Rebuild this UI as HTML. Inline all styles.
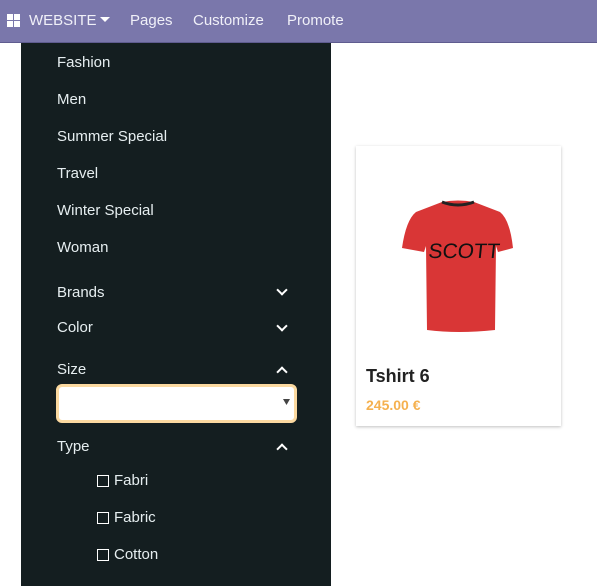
<!DOCTYPE html>
<html><head><meta charset="utf-8"><style>
body{margin:0;width:597px;height:586px;overflow:hidden;background:#fff;font-family:"Liberation Sans",sans-serif;position:relative}
.nav{position:absolute;left:0;top:0;width:597px;height:42px;background:#7a77ab;border-bottom:1px solid #5f5c8f;color:#f0f0f8;font-size:15px}
.nav span{position:absolute;top:12px}
.side{position:absolute;left:21px;top:43px;width:310px;height:543px;background:#141e20;color:#e6eef0;font-size:15px}
.t{position:absolute;left:36px;line-height:18px}
.chev{position:absolute;left:257px;width:6px;height:6px;border-right:2.5px solid #fff;border-bottom:2.5px solid #fff}
.cb{position:absolute;left:76px;width:10px;height:10px;border:1px solid #fff}
.card{position:absolute;left:356px;top:146px;width:205px;height:280px;background:#fff;box-shadow:0 1px 3px rgba(0,0,0,.25)}
</style></head><body>
<div class="nav">
<svg style="position:absolute;left:7px;top:14px" width="13" height="13"><rect x="0" y="0" width="6" height="6" fill="#fff"/><rect x="7" y="0" width="6" height="6" fill="#fff"/><rect x="0" y="7" width="6" height="6" fill="#fff"/><rect x="7" y="7" width="6" height="6" fill="#fff"/></svg>
<span style="left:29px">WEBSITE</span>
<svg style="position:absolute;left:100px;top:17px" width="10" height="6"><path d="M0 0H10L5 5Z" fill="#fff"/></svg>
<span style="left:130px">Pages</span><span style="left:193px">Customize</span><span style="left:287px">Promote</span>
</div>
<div class="side">
<div class="t" style="top:11px">Fashion</div>
<div class="t" style="top:48px">Men</div>
<div class="t" style="top:85px">Summer Special</div>
<div class="t" style="top:122px">Travel</div>
<div class="t" style="top:159px">Winter Special</div>
<div class="t" style="top:196px">Woman</div>
<div class="t" style="top:241px">Brands</div><div class="chev" style="top:243px;transform:rotate(45deg)"></div>
<div class="t" style="top:276px">Color</div><div class="chev" style="top:279px;transform:rotate(45deg)"></div>
<div class="t" style="top:318px">Size</div><div class="chev" style="top:325px;transform:rotate(225deg)"></div>
<div style="position:absolute;left:35px;top:341px;width:235px;height:33px;background:#fff;border:3px solid #fbd9a0;border-radius:6px"></div>
<svg style="position:absolute;left:262px;top:356px" width="7" height="6"><path d="M0 0H7L3.5 6Z" fill="#444"/></svg>
<div class="t" style="top:395px">Type</div><div class="chev" style="top:402px;transform:rotate(225deg)"></div>
<div class="cb" style="top:432px"></div><div class="t" style="left:93px;top:429px">Fabri</div>
<div class="cb" style="top:469px"></div><div class="t" style="left:93px;top:466px">Fabric</div>
<div class="cb" style="top:506px"></div><div class="t" style="left:93px;top:503px">Cotton</div>
</div>
<div class="card">
<svg style="position:absolute;left:44px;top:54px" width="116" height="134" viewBox="0 0 116 134">
<path d="M42 2 Q58 -1 74 2 L100 12 Q110 20 113 48 L98 52 L96 46 L95 130 Q58 134 27 130 L26 46 L24 52 L2 48 Q6 20 16 12 Z" fill="#d93636"/>
<path d="M42 2 Q58 8 74 2" stroke="#222" stroke-width="3" fill="none"/>
<text x="34" y="58" font-family="Liberation Sans" font-size="21" fill="#111" transform="skewX(-6)">SCOTT</text>
</svg>
<div style="position:absolute;left:10px;top:220px;font-size:18px;font-weight:bold;color:#222">Tshirt 6</div>
<div style="position:absolute;left:10px;top:251px;font-size:14px;font-weight:bold;color:#f5b14f">245.00 €</div>
</div>
</body></html>
